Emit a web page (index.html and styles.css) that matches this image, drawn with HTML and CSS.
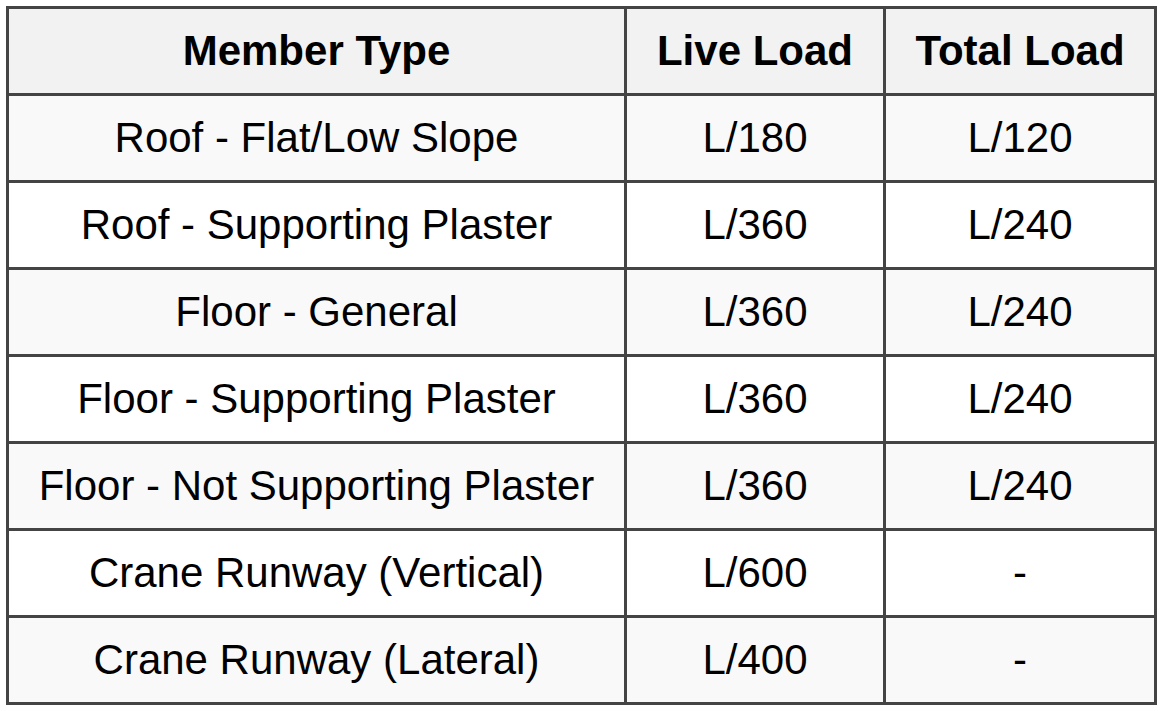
FILE: index.html
```html
<!DOCTYPE html>
<html lang="en">
<head>
<meta charset="utf-8">
<title>Deflection Limits</title>
<link rel="stylesheet" href="styles.css">
</head>
<body>
<table class="limits">
  <colgroup>
    <col class="c1">
    <col class="c2">
    <col class="c3">
  </colgroup>
  <thead>
    <tr><th>Member Type</th><th>Live Load</th><th>Total Load</th></tr>
  </thead>
  <tbody>
    <tr><td>Roof - Flat/Low Slope</td><td>L/180</td><td>L/120</td></tr>
    <tr><td>Roof - Supporting Plaster</td><td>L/360</td><td>L/240</td></tr>
    <tr><td>Floor - General</td><td>L/360</td><td>L/240</td></tr>
    <tr><td>Floor - Supporting Plaster</td><td>L/360</td><td>L/240</td></tr>
    <tr><td>Floor - Not Supporting Plaster</td><td>L/360</td><td>L/240</td></tr>
    <tr><td>Crane Runway (Vertical)</td><td>L/600</td><td>-</td></tr>
    <tr><td>Crane Runway (Lateral)</td><td>L/400</td><td>-</td></tr>
  </tbody>
</table>
</body>
</html>
```
FILE: styles.css
```css
html, body {
  margin: 0;
  padding: 0;
  background: #ffffff;
}
body {
  padding: 6px;
  font-family: "Liberation Sans", Arial, sans-serif;
  color: #000000;
}
.limits {
  border-collapse: separate;
  border-spacing: 0;
  table-layout: fixed;
  width: 1151px;
  border-left: 3px solid #444444;
  border-top: 3px solid #444444;
}
.c1 { width: 618px; }
.c2 { width: 259px; }
.c3 { width: 271px; }
.limits th,
.limits td {
  height: 84px;
  padding: 0;
  border-right: 3px solid #444444;
  border-bottom: 3px solid #444444;
  text-align: center;
  vertical-align: middle;
  font-size: 42px;
  line-height: 48px;
  white-space: nowrap;
}
.limits th {
  background: #f2f2f2;
  font-weight: bold;
}
.limits td {
  font-weight: normal;
  background: #ffffff;
}
.limits tbody tr:nth-child(odd) td {
  background: #f9f9f9;
}
```
